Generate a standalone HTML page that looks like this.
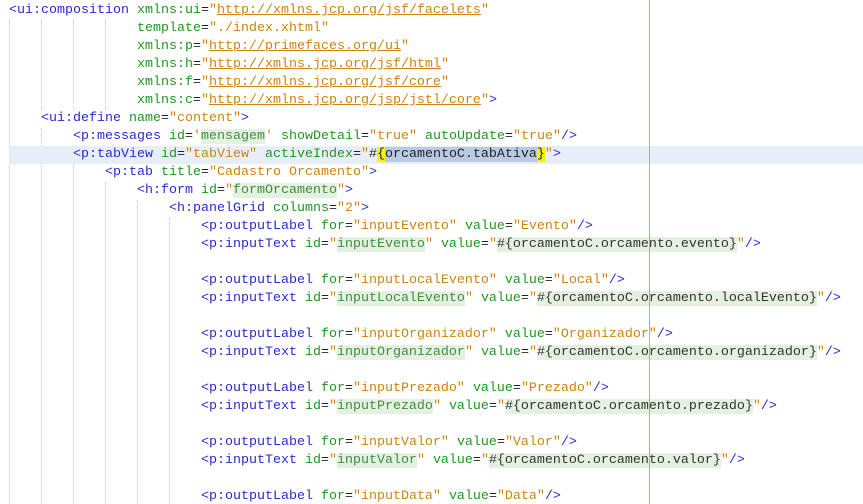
<!DOCTYPE html>
<html><head><meta charset="utf-8"><style>
html,body{margin:0;padding:0;background:#fff;width:863px;height:504px;overflow:hidden;position:relative}
.ln{position:absolute;left:9px;right:0;height:18px;line-height:18px;font-family:"Liberation Mono",monospace;font-size:13.333px;white-space:pre;color:#222}
.cur{background:#e8eef8}
.t{color:#2a2ad0}.a{color:#1a9a1a}.v{color:#cf8210}.u{color:#cf8210;text-decoration:underline}
.g{background:#e4f0e0;color:#3a923a}.e{background:#e4f0e0;color:#333}
.y{background:#f4f400}.s{background:#b8cbe2}
.gd{position:absolute;width:0;border-left:1px dotted #c8c8c8}
.red{position:absolute;left:649px;top:0;width:1px;height:504px;background:#eb8f8f}
</style></head><body>
<div class="gd" style="left:9px;top:20px;height:484px"></div>
<div class="gd" style="left:41px;top:20px;height:90px"></div>
<div class="gd" style="left:41px;top:128px;height:376px"></div>
<div class="gd" style="left:73px;top:20px;height:90px"></div>
<div class="gd" style="left:73px;top:164px;height:340px"></div>
<div class="gd" style="left:105px;top:20px;height:90px"></div>
<div class="gd" style="left:105px;top:182px;height:322px"></div>
<div class="gd" style="left:137px;top:200px;height:304px"></div>
<div class="gd" style="left:169px;top:218px;height:286px"></div>
<div class="ln" style="top:2px"><span class="t">&lt;ui:composition</span> <span class="a">xmlns:ui</span>=<span class="v">"</span><span class="u">http://xmlns.jcp.org/jsf/facelets</span><span class="v">"</span></div>
<div class="ln" style="top:20px">                <span class="a">template</span>=<span class="v">"./index.xhtml"</span></div>
<div class="ln" style="top:38px">                <span class="a">xmlns:p</span>=<span class="v">"</span><span class="u">http://primefaces.org/ui</span><span class="v">"</span></div>
<div class="ln" style="top:56px">                <span class="a">xmlns:h</span>=<span class="v">"</span><span class="u">http://xmlns.jcp.org/jsf/html</span><span class="v">"</span></div>
<div class="ln" style="top:74px">                <span class="a">xmlns:f</span>=<span class="v">"</span><span class="u">http://xmlns.jcp.org/jsf/core</span><span class="v">"</span></div>
<div class="ln" style="top:92px">                <span class="a">xmlns:c</span>=<span class="v">"</span><span class="u">http://xmlns.jcp.org/jsp/jstl/core</span><span class="v">"</span><span class="t">&gt;</span></div>
<div class="ln" style="top:110px">    <span class="t">&lt;ui:define</span> <span class="a">name</span>=<span class="v">"content"</span><span class="t">&gt;</span></div>
<div class="ln" style="top:128px">        <span class="t">&lt;p:messages</span> <span class="a">id</span>=<span class="v">'</span><span class="g">mensagem</span><span class="v">'</span> <span class="a">showDetail</span>=<span class="v">"true"</span> <span class="a">autoUpdate</span>=<span class="v">"true"</span><span class="t">/&gt;</span></div>
<div class="ln cur" style="top:146px">        <span class="t">&lt;p:tabView</span> <span class="a">id</span>=<span class="v">"tabView"</span> <span class="a">activeIndex</span>=<span class="v">"</span>#<span class="y">{</span><span class="s">orcamentoC.tabAtiva</span><span class="y">}</span><span class="v">"</span><span class="t">&gt;</span></div>
<div class="ln" style="top:164px">            <span class="t">&lt;p:tab</span> <span class="a">title</span>=<span class="v">"Cadastro Orcamento"</span><span class="t">&gt;</span></div>
<div class="ln" style="top:182px">                <span class="t">&lt;h:form</span> <span class="a">id</span>=<span class="v">"</span><span class="g">formOrcamento</span><span class="v">"</span><span class="t">&gt;</span></div>
<div class="ln" style="top:200px">                    <span class="t">&lt;h:panelGrid</span> <span class="a">columns</span>=<span class="v">"2"</span><span class="t">&gt;</span></div>
<div class="ln" style="top:218px">                        <span class="t">&lt;p:outputLabel</span> <span class="a">for</span>=<span class="v">"inputEvento"</span> <span class="a">value</span>=<span class="v">"Evento"</span><span class="t">/&gt;</span></div>
<div class="ln" style="top:236px">                        <span class="t">&lt;p:inputText</span> <span class="a">id</span>=<span class="v">"</span><span class="g">inputEvento</span><span class="v">"</span> <span class="a">value</span>=<span class="v">"</span><span class="e">#{orcamentoC.orcamento.evento}</span><span class="v">"</span><span class="t">/&gt;</span></div>
<div class="ln" style="top:272px">                        <span class="t">&lt;p:outputLabel</span> <span class="a">for</span>=<span class="v">"inputLocalEvento"</span> <span class="a">value</span>=<span class="v">"Local"</span><span class="t">/&gt;</span></div>
<div class="ln" style="top:290px">                        <span class="t">&lt;p:inputText</span> <span class="a">id</span>=<span class="v">"</span><span class="g">inputLocalEvento</span><span class="v">"</span> <span class="a">value</span>=<span class="v">"</span><span class="e">#{orcamentoC.orcamento.localEvento}</span><span class="v">"</span><span class="t">/&gt;</span></div>
<div class="ln" style="top:326px">                        <span class="t">&lt;p:outputLabel</span> <span class="a">for</span>=<span class="v">"inputOrganizador"</span> <span class="a">value</span>=<span class="v">"Organizador"</span><span class="t">/&gt;</span></div>
<div class="ln" style="top:344px">                        <span class="t">&lt;p:inputText</span> <span class="a">id</span>=<span class="v">"</span><span class="g">inputOrganizador</span><span class="v">"</span> <span class="a">value</span>=<span class="v">"</span><span class="e">#{orcamentoC.orcamento.organizador}</span><span class="v">"</span><span class="t">/&gt;</span></div>
<div class="ln" style="top:380px">                        <span class="t">&lt;p:outputLabel</span> <span class="a">for</span>=<span class="v">"inputPrezado"</span> <span class="a">value</span>=<span class="v">"Prezado"</span><span class="t">/&gt;</span></div>
<div class="ln" style="top:398px">                        <span class="t">&lt;p:inputText</span> <span class="a">id</span>=<span class="v">"</span><span class="g">inputPrezado</span><span class="v">"</span> <span class="a">value</span>=<span class="v">"</span><span class="e">#{orcamentoC.orcamento.prezado}</span><span class="v">"</span><span class="t">/&gt;</span></div>
<div class="ln" style="top:434px">                        <span class="t">&lt;p:outputLabel</span> <span class="a">for</span>=<span class="v">"inputValor"</span> <span class="a">value</span>=<span class="v">"Valor"</span><span class="t">/&gt;</span></div>
<div class="ln" style="top:452px">                        <span class="t">&lt;p:inputText</span> <span class="a">id</span>=<span class="v">"</span><span class="g">inputValor</span><span class="v">"</span> <span class="a">value</span>=<span class="v">"</span><span class="e">#{orcamentoC.orcamento.valor}</span><span class="v">"</span><span class="t">/&gt;</span></div>
<div class="ln" style="top:488px">                        <span class="t">&lt;p:outputLabel</span> <span class="a">for</span>=<span class="v">"inputData"</span> <span class="a">value</span>=<span class="v">"Data"</span><span class="t">/&gt;</span></div>
<div class="red"></div>
</body></html>
